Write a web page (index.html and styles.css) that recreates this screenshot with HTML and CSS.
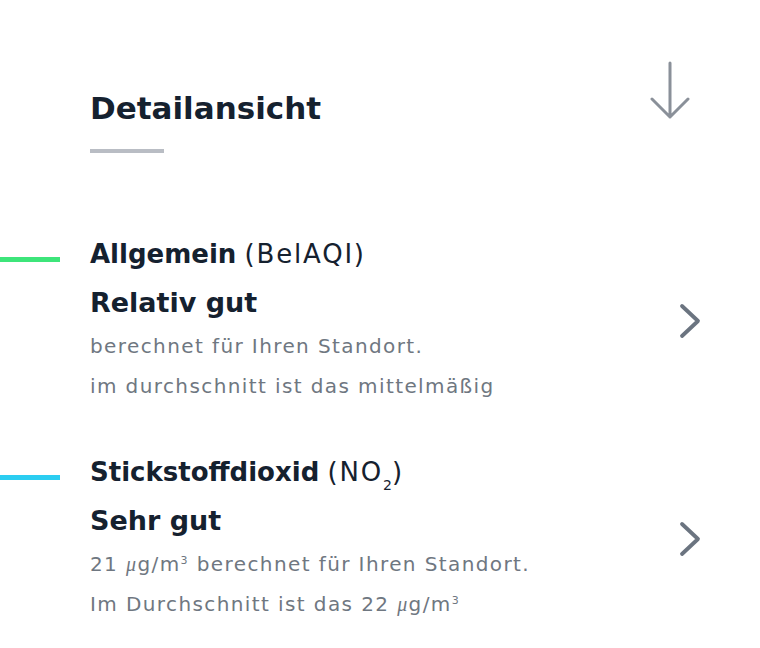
FILE: index.html
```html
<!DOCTYPE html>
<html lang="de">
<head>
<meta charset="utf-8">
<link rel="stylesheet" href="styles.css">
</head>
<body>
<div class="page">
  <header class="head">
    <div class="head-text">
      <h1 class="title">Detailansicht</h1>
      <div class="title-rule"></div>
    </div>
    <svg class="down" width="40" height="60" viewBox="0 0 40 60">
      <path d="M20 2 V56 M2 38 L20 56 L38 38" fill="none" stroke="#8a9099" stroke-width="3" stroke-linecap="round" stroke-linejoin="round"/>
    </svg>
  </header>

  <section class="item">
    <div class="bar green"></div>
    <div class="item-body">
      <div class="item-title"><b>Allgemein</b> <span class="reg">(BelAQI)</span></div>
      <div class="item-state">Relativ gut</div>
      <div class="item-note first">berechnet für Ihren Standort.</div>
      <div class="item-note">im durchschnitt ist das mittelmäßig</div>
    </div>
    <svg class="chev" width="24" height="36" viewBox="0 0 24 36">
      <path d="M4 3 L20 18 L4 33" fill="none" stroke="#6b7480" stroke-width="3.8" stroke-linecap="round" stroke-linejoin="round"/>
    </svg>
  </section>

  <section class="item">
    <div class="bar cyan"></div>
    <div class="item-body">
      <div class="item-title"><b>Stickstoffdioxid</b> <span class="reg">(NO<sub>2</sub>)</span></div>
      <div class="item-state">Sehr gut</div>
      <div class="item-note first">21 <i class="mu">μ</i>g/m<sup>3</sup> berechnet für Ihren Standort.</div>
      <div class="item-note">Im Durchschnitt ist das 22 <i class="mu">μ</i>g/m<sup>3</sup></div>
    </div>
    <svg class="chev" width="24" height="36" viewBox="0 0 24 36">
      <path d="M4 3 L20 18 L4 33" fill="none" stroke="#6b7480" stroke-width="3.8" stroke-linecap="round" stroke-linejoin="round"/>
    </svg>
  </section>
</div>
</body>
</html>
```

FILE: styles.css
```css
html, body {
  margin: 0;
  padding: 0;
  background: #ffffff;
}
body {
  font-family: "DejaVu Sans", "Open Sans", sans-serif;
  color: #15212f;
  width: 760px;
  height: 648px;
  overflow: hidden;
}
.page {
  padding: 60px 0 0 0;
}
.head {
  display: flex;
  justify-content: space-between;
  align-items: flex-start;
  padding: 0 70px 0 90px;
  height: 176px;
}
.head-text {
  padding-top: 28px;
}
.title {
  margin: 0;
  font-size: 31px;
  font-weight: 700;
  line-height: 40px;
}
.title-rule {
  width: 74px;
  height: 4px;
  background: #b9bdc4;
  margin-top: 21px;
}
.down {
  display: block;
  margin-top: 1px;
}
.item {
  display: flex;
  align-items: flex-start;
  height: 218px;
  position: relative;
}
.bar {
  position: absolute;
  left: 0;
  top: 21px;
  width: 60px;
  height: 5px;
}
.green { background: #3de57a; }
.cyan { background: #2bcdf1; }
.item-body {
  flex: 1;
  padding-left: 90px;
}
.item-title {
  font-size: 26px;
  line-height: 36px;
  font-weight: 400;
}
.item-title b { font-weight: 700; }
.item-title .reg { letter-spacing: 1.8px; }
.item-title sub {
  font-size: 14px;
  vertical-align: -9px;
  line-height: 0;
  letter-spacing: 0;
}
.item-state {
  font-size: 27px;
  font-weight: 700;
  line-height: 40px;
  margin-top: 11px;
}
.item-note {
  font-size: 20px;
  color: #6f7781;
  line-height: 40px;
  letter-spacing: 1.4px;
}
.item-note.first {
  margin-top: 3px;
}
.item-note sup {
  font-size: 11px;
  vertical-align: 7px;
  line-height: 0;
}
.mu {
  font-family: "Liberation Serif", serif;
  font-style: italic;
}
.chev {
  display: block;
  margin-right: 58px;
  margin-top: 67px;
}
```
